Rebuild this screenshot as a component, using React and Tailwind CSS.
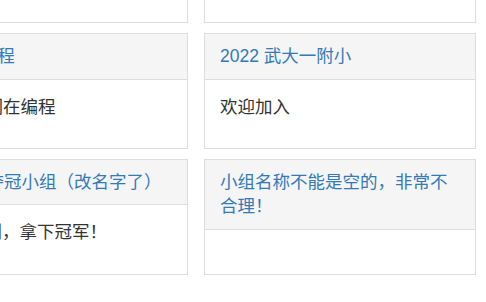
import React from "react";

const GROUPS = [
  { title: "Scratch 兴趣小组", body: "一起学习" },
  { title: "武汉大学附属小学", body: "欢迎大家" },
  { title: "C语言编程", body: "ok，我们在编程" },
  { title: "2022 武大一附小", body: "欢迎加入" },
  { title: "Python夺冠小组（改名字了）", body: "比赛顺利，拿下冠军！" },
  { title: "小组名称不能是空的，非常不合理！", body: "" },
];

function Panel({ title, body }) {
  return (
    <div className="flex flex-col border border-[#ddd] bg-white">
      <div className="border-b border-[#ddd] bg-[#f5f5f5] px-[15px] pt-[10px] pb-[10px] text-[#337ab7]">
        {title}
      </div>
      <div className="flex-1 px-[15px] pt-[15px] pb-[29px] text-[#333]">{body}</div>
    </div>
  );
}

export default function App() {
  return (
    <div
      className="h-screen w-full overflow-hidden bg-white text-[17.5px] leading-[24.3px]"
      style={{ fontFamily: '"Liberation Sans", "Noto Sans CJK SC", sans-serif' }}
    >
      <div className="-ml-[84px] -mt-[92.2px] grid grid-cols-[272px_272px] gap-x-4 gap-y-[10px]">
        {GROUPS.map((g, i) => (
          <Panel key={i} title={g.title} body={g.body} />
        ))}
      </div>
    </div>
  );
}
